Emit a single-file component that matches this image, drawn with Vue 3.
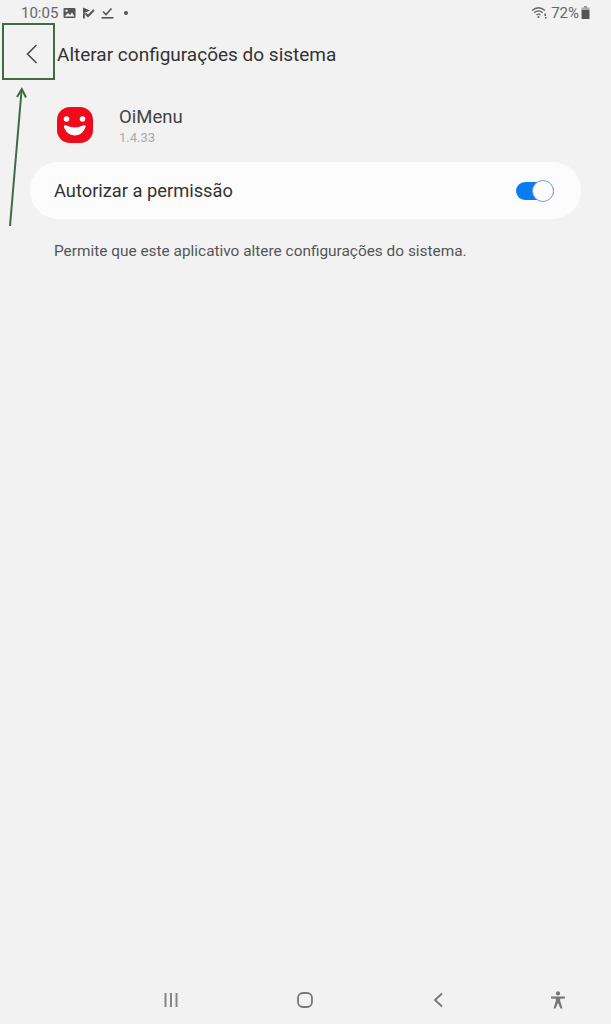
<script setup>
const appName = "OiMenu";
const appVersion = "1.4.33";
</script>

<template>
  <div class="screen">
    <div class="status-bar">
      <div class="status-left">
        <span class="clock">10:05</span>
        <svg class="status-icon" width="13" height="12" viewBox="0 0 13 12">
          <rect x="0.5" y="1" width="12" height="10" rx="1" fill="#555" />
          <circle cx="3.5" cy="3.8" r="1.2" fill="#f2f2f2" />
          <path d="M1.5 9.5 L5 6 L7 8 L9 5.5 L11.5 9.5 Z" fill="#f2f2f2" />
        </svg>
        <svg class="status-icon" width="13" height="12" viewBox="0 0 13 12">
          <path d="M1 0.5 L8 3.5 L1 6.5 Z M1 6 L1 11.5 L2.8 11.5 L2.8 6 Z" fill="#555" />
          <path d="M3.5 6.5 L6 9 L12 3" fill="none" stroke="#555" stroke-width="2" />
        </svg>
        <svg class="status-icon" width="13" height="12" viewBox="0 0 13 12">
          <path d="M2 4.5 L5 7.5 L10.5 1.5" fill="none" stroke="#555" stroke-width="1.6" />
          <rect x="0.5" y="10" width="12" height="1.6" fill="#555" />
        </svg>
        <span class="dot"></span>
      </div>
      <div class="status-right">
        <svg class="wifi" width="17" height="13" viewBox="0 0 17 13">
          <path d="M1 4.5 Q7.5 -1 14 4.5" fill="none" stroke="#666" stroke-width="1.3" />
          <path d="M3.2 6.8 Q7.5 3 11.8 6.8" fill="none" stroke="#666" stroke-width="1.3" />
          <path d="M5.5 9 Q7.5 7.2 9.5 9" fill="none" stroke="#666" stroke-width="1.3" />
          <circle cx="7.5" cy="11" r="1.1" fill="#666" />
          <path d="M13.5 7.5 L15 7.5 L15 10 L13.5 10 Z M14 11 L15.5 11 L15.5 12.4 L14 12.4 Z" fill="#555" />
        </svg>
        <span class="battery-text">72%</span>
        <svg class="battery" width="9" height="13" viewBox="0 0 9 13">
          <rect x="3" y="0" width="3" height="2" fill="#999" />
          <rect x="0.5" y="1.5" width="8" height="3" fill="#aaa" />
          <rect x="0.5" y="4" width="8" height="9" fill="#555" />
        </svg>
      </div>
    </div>

    <div class="app-bar">
      <button class="back-btn" type="button" aria-label="Voltar">
        <svg width="12" height="20" viewBox="0 0 12 20">
          <path d="M10.5 1 L1.5 10 L10.5 19" fill="none" stroke="#444" stroke-width="1.5" />
        </svg>
      </button>
      <h1 class="title">Alterar configurações do sistema</h1>
    </div>

    <div class="app-info">
      <svg class="app-icon" width="36" height="36" viewBox="0 0 36 36">
        <rect x="0" y="0" width="36" height="36" rx="13" fill="#ef0a1c" />
        <circle cx="9.5" cy="12" r="2.8" fill="#fff" />
        <circle cx="25.5" cy="12" r="2.8" fill="#fff" />
        <path d="M7 18.5 Q8 18 9.5 18.5 Q18 22.5 26 18.5 Q27.5 18 28.5 18.5 Q29 19.5 28 21.5 Q24.5 28.5 17.8 28.5 Q11 28.5 7.5 21.5 Q6.5 19.5 7 18.5 Z" fill="#fff" />
      </svg>
      <div class="app-text">
        <div class="app-name">{{ appName }}</div>
        <div class="app-version">{{ appVersion }}</div>
      </div>
    </div>

    <div class="permission-card">
      <span class="permission-label">Autorizar a permissão</span>
      <span class="toggle"><span class="toggle-knob"></span></span>
    </div>

    <p class="description">Permite que este aplicativo altere configurações do sistema.</p>

    <div class="spacer"></div>

    <div class="nav-bar">
      <svg width="16" height="16" viewBox="0 0 16 16">
        <path d="M2.5 1 V15 M8 1 V15 M13.5 1 V15" fill="none" stroke="#858585" stroke-width="2" />
      </svg>
      <svg class="nav-home" width="18" height="18" viewBox="0 0 18 18">
        <rect x="2" y="2" width="14" height="14" rx="5" fill="none" stroke="#777" stroke-width="1.8" />
      </svg>
      <svg class="nav-back" width="12" height="16" viewBox="0 0 12 16">
        <path d="M10 1.5 L3 8 L10 14.5" fill="none" stroke="#777" stroke-width="1.9" />
      </svg>
      <svg class="nav-access" width="16" height="18" viewBox="0 0 16 18">
        <circle cx="8" cy="2.4" r="2.1" fill="#777" />
        <path d="M1 5.5 L15 5.5 L15 7.4 L10.2 7.8 L10.2 10 L12.5 17.5 L10.5 17.5 L8 12 L5.5 17.5 L3.5 17.5 L5.8 10 L5.8 7.8 L1 7.4 Z" fill="#777" />
      </svg>
    </div>

    <div class="annotation">
      <div class="highlight-box"></div>
      <svg class="arrow" width="30" height="142" viewBox="0 0 30 142">
        <path d="M10 140 L21.5 5" fill="none" stroke="#3f6b42" stroke-width="2" />
        <path d="M17 11 L21.8 3 L26 11.5" fill="none" stroke="#3f6b42" stroke-width="2" />
      </svg>
    </div>
  </div>
</template>

<style>
html,
body {
  margin: 0;
  background: #f2f2f2;
}
</style>

<style scoped>
.screen {
  position: relative;
  width: 611px;
  height: 1024px;
  display: flex;
  flex-direction: column;
  overflow: hidden;
  background: #f2f2f2;
  color: #333;
  font-family: Roboto, "Noto Sans", sans-serif;
}

.status-bar {
  height: 25px;
  padding: 0 21px 0 21px;
  display: flex;
  align-items: center;
  justify-content: space-between;
  color: #666;
  font-size: 15px;
}

.status-left,
.status-right {
  display: flex;
  align-items: center;
}

.clock {
  margin-right: 5px;
}

.status-icon {
  margin-right: 6px;
}

.dot {
  width: 4px;
  height: 4px;
  margin-left: 4px;
  border-radius: 50%;
  background: #555;
}

.wifi {
  margin-right: 3px;
}

.battery-text {
  font-size: 15px;
  margin-right: 2px;
}

.app-bar {
  height: 58px;
  display: flex;
  align-items: center;
}

.back-btn {
  width: 57px;
  height: 58px;
  padding: 0 0 0 7px;
  border: none;
  background: none;
  display: flex;
  align-items: center;
  justify-content: center;
}

.title {
  margin: 0;
  font-size: 19px;
  font-weight: 400;
  color: #333;
}

.app-info {
  height: 36px;
  margin-top: 24px;
  padding-left: 57px;
  display: flex;
  align-items: center;
  gap: 26px;
}

.app-name {
  font-size: 18.5px;
  line-height: 25px;
  color: #444;
}

.app-version {
  font-size: 13px;
  line-height: 16px;
  color: #aaa;
}

.permission-card {
  margin: 19px 30px 0;
  height: 57px;
  padding: 0 27px 0 24px;
  border-radius: 28px;
  background: #fcfcfc;
  display: flex;
  align-items: center;
  justify-content: space-between;
}

.permission-label {
  font-size: 18.3px;
  color: #333;
}

.toggle {
  position: relative;
  width: 38px;
  height: 18px;
  border-radius: 9px;
  background: #0a7cf0;
}

.toggle-knob {
  position: absolute;
  right: 0;
  top: -2px;
  width: 20px;
  height: 20px;
  border: 1px solid #7fa3c8;
  border-radius: 50%;
  background: #fcfcfc;
}

.description {
  margin: 23px 0 0;
  padding-left: 54px;
  font-size: 15.4px;
  line-height: 18px;
  color: #555;
}

.spacer {
  flex: 1;
}

.nav-bar {
  height: 48px;
  padding-left: 163px;
  display: flex;
  align-items: center;
  box-sizing: border-box;
}

.nav-home {
  margin-left: 117px;
}

.nav-back {
  margin-left: 118px;
}

.nav-access {
  margin-left: 106px;
}

.annotation {
  position: absolute;
  left: 0;
  top: 0;
}

.highlight-box {
  position: absolute;
  left: 2px;
  top: 23px;
  width: 49px;
  height: 53px;
  border: 2.5px solid #3f6b42;
}

.arrow {
  position: absolute;
  left: 0;
  top: 86px;
}
</style>
